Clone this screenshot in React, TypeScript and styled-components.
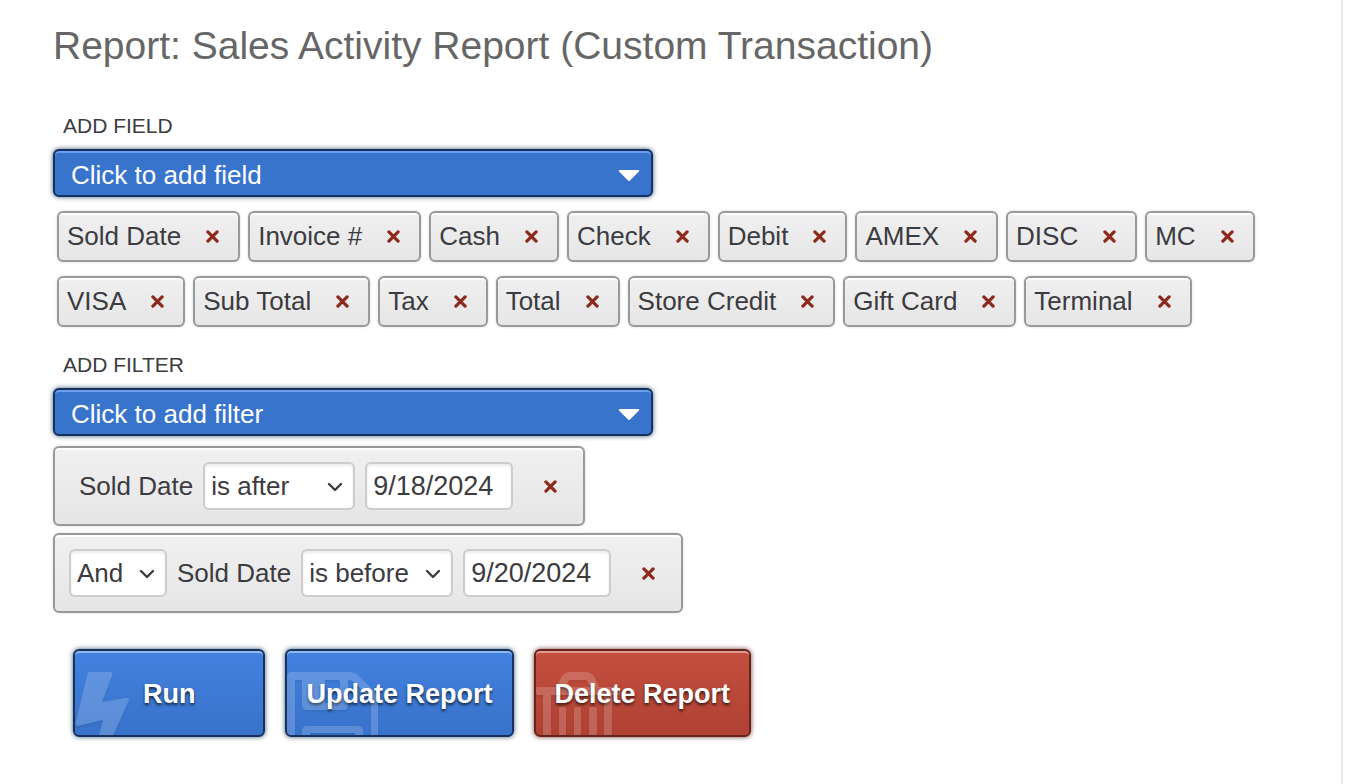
import React, { useState } from "react";
import styled, { createGlobalStyle, css } from "styled-components";

const GlobalStyle = createGlobalStyle`
  *, *::before, *::after { box-sizing: border-box; }
  body {
    margin: 0;
    background: #fff;
    color: #3b3b40;
    font-family: "Liberation Sans", Arial, sans-serif;
    font-size: 26px;
  }
  button, select, input { font: inherit; color: inherit; margin: 0; }
`;

const Page = styled.main`
  min-height: 100vh;
  margin-right: 3px;
  padding: 23px 53px 46px;
  border-right: 2px solid #e9e9e9;
`;

const Title = styled.h1`
  margin: 0 0 45px;
  font-size: 39px;
  line-height: 46px;
  font-weight: 400;
  color: #666;
`;

const Section = styled.section`
  margin-bottom: 26px;
`;

const SectionLabel = styled.label`
  display: block;
  margin: 0 0 11px 10px;
  font-size: 21px;
  line-height: 24px;
  text-transform: uppercase;
`;

const SelectWrap = styled.div<{ $width: string }>`
  position: relative;
  width: ${(p) => p.$width};
  max-width: 100%;
`;

const PickerSelect = styled.select`
  appearance: none;
  display: block;
  width: 100%;
  height: 48px;
  padding: 4px 48px 0 16px;
  border: 2px solid #16315d;
  border-radius: 6px;
  background: #3874cc;
  box-shadow: inset 0 2px 0 #6a9ff0, 0 0 5px rgba(10, 50, 80, 0.8);
  color: #fff;
`;

const CaretIcon = styled.svg`
  position: absolute;
  top: 20px;
  right: 13px;
  width: 22px;
  height: 13px;
  pointer-events: none;
`;

const panel = css`
  border: 2px solid #999;
  border-radius: 6px;
  background: linear-gradient(#f0f0f0, #e6e6e6);
  box-shadow: inset 0 3px 1px -1px #fff, 0 0 3px rgba(0, 0, 0, 0.15);
`;

const ChipList = styled.ul`
  display: flex;
  flex-wrap: wrap;
  gap: 14px 8px;
  margin: 14px 0 0 4px;
  padding: 0;
  list-style: none;
`;

const Chip = styled.li`
  ${panel}
  display: flex;
  align-items: center;
  gap: 25px;
  height: 51px;
  padding: 0 19px 0 8px;
  white-space: nowrap;
`;

const RemoveButton = styled.button`
  display: flex;
  padding: 0;
  border: 0;
  background: none;
  cursor: pointer;
`;

const FilterList = styled.div`
  display: flex;
  flex-direction: column;
  align-items: flex-start;
  gap: 7px;
  margin-top: 10px;
`;

const FilterRow = styled.div<{ $first?: boolean }>`
  ${panel}
  display: flex;
  align-items: center;
  gap: 10px;
  padding: 14px 26px 14px ${(p) => (p.$first ? 24 : 14)}px;
  white-space: nowrap;

  ${RemoveButton} {
    margin-left: 21px;
  }
`;

const field = css`
  display: block;
  height: 48px;
  border: 2px solid #ccc;
  border-radius: 6px;
  background: #fff;
  box-shadow: inset 0 2px 3px rgba(0, 0, 0, 0.08);
`;

const FilterSelect = styled.select`
  ${field}
  appearance: none;
  width: 100%;
  padding: 0 28px 0 6px;
`;

const DateInput = styled.input`
  ${field}
  width: 148px;
  padding: 0 6px;
  font-size: 27px;
`;

const ChevronIcon = styled.svg`
  position: absolute;
  top: 19px;
  right: 12px;
  width: 16px;
  height: 12px;
  pointer-events: none;
`;

const Actions = styled.div`
  display: flex;
  flex-wrap: wrap;
  gap: 20px;
  margin: 36px 0 0 20px;
`;

const tones = {
  blue: { edge: "#16315d", top: "#4282df", bottom: "#3872ca", shine: "#8fb8f0", glow: "rgba(10, 50, 80, 0.8)" },
  red: { edge: "#66221b", top: "#c44f3e", bottom: "#af4133", shine: "#e09c92", glow: "rgba(80, 20, 10, 0.8)" },
};

const ActionButton = styled.button<{ $tone: keyof typeof tones; $wide?: boolean }>`
  position: relative;
  overflow: hidden;
  height: 88px;
  padding: 2px ${(p) => (p.$wide ? 68 : 19)}px 0;
  border: 2px solid ${(p) => tones[p.$tone].edge};
  border-radius: 6px;
  background: linear-gradient(${(p) => tones[p.$tone].top}, ${(p) => tones[p.$tone].bottom});
  box-shadow: inset 0 2px 0 ${(p) => tones[p.$tone].shine}, 0 0 5px ${(p) => tones[p.$tone].glow};
  color: #fff;
  font-size: 27px;
  font-weight: 700;
  text-shadow: 0 2px 3px rgba(0, 0, 0, 0.7);
  white-space: nowrap;
  cursor: pointer;
`;

const Watermark = styled.svg`
  position: absolute;
  left: 0;
  top: 0;
  width: 92px;
  height: 84px;
  fill: #fff;
  opacity: 0.18;
  filter: drop-shadow(0 2px 1px rgba(0, 0, 0, 0.4));
  pointer-events: none;
`;

const Remove = ({ name, onClick }: { name: string; onClick: () => void }) => (
  <RemoveButton type="button" aria-label={`Remove ${name}`} onClick={onClick}>
    <svg width="13" height="13" viewBox="0 0 13 13" aria-hidden="true">
      <path d="M1.900 1.900L11.100 11.100M11.100 1.900L1.900 11.100" stroke="#8c2a1c" strokeWidth="3.2" strokeLinecap="round" />
    </svg>
  </RemoveButton>
);

const Picker = ({ id, prompt, options }: { id: string; prompt: string; options: string[] }) => (
  <SelectWrap $width="600px">
    <PickerSelect id={id} defaultValue="">
      <option value="">{prompt}</option>
      {options.map((o) => (
        <option key={o}>{o}</option>
      ))}
    </PickerSelect>
    <CaretIcon viewBox="0 0 22 13" aria-hidden="true">
      <path d="M1.6 1H20.4Q22 1.2 21 2.5L12 11.6Q11 12.6 10 11.6L1 2.5Q0 1.2 1.6 1Z" fill="#fff" />
    </CaretIcon>
  </SelectWrap>
);

const Choice = ({ label, width, value, options }: { label: string; width: string; value: string; options: string[] }) => (
  <SelectWrap $width={width}>
    <FilterSelect aria-label={label} defaultValue={value}>
      {options.map((o) => (
        <option key={o}>{o}</option>
      ))}
    </FilterSelect>
    <ChevronIcon viewBox="0 0 16 12" aria-hidden="true">
      <path d="M2 3L8 9L14 3" fill="none" stroke="#3b3b40" strokeWidth="2.4" strokeLinecap="round" strokeLinejoin="round" />
    </ChevronIcon>
  </SelectWrap>
);

const allFields = [
  "Sold Date", "Invoice #", "Cash", "Check", "Debit", "AMEX", "DISC", "MC",
  "VISA", "Sub Total", "Tax", "Total", "Store Credit", "Gift Card", "Terminal",
];
const operators = ["is after", "is before"];
const initialFilters = [
  { operator: "is after", date: "9/18/2024" },
  { operator: "is before", date: "9/20/2024" },
];

export default function App() {
  const [fields, setFields] = useState(allFields);
  const [filters, setFilters] = useState(initialFilters);

  return (
    <>
      <GlobalStyle />
      <Page>
        <Title>Report: Sales Activity Report (Custom Transaction)</Title>
        <Section>
          <SectionLabel htmlFor="add-field">Add Field</SectionLabel>
          <Picker id="add-field" prompt="Click to add field" options={allFields} />
          <ChipList>
            {fields.map((name) => (
              <Chip key={name}>
                <span>{name}</span>
                <Remove name={name} onClick={() => setFields(fields.filter((f) => f !== name))} />
              </Chip>
            ))}
          </ChipList>
        </Section>
        <Section>
          <SectionLabel htmlFor="add-filter">Add Filter</SectionLabel>
          <Picker id="add-filter" prompt="Click to add filter" options={allFields} />
          <FilterList>
            {filters.map((filter, i) => (
              <FilterRow key={filter.date} $first={i === 0}>
                {i > 0 && <Choice label="Combine with" width="98px" value="And" options={["And", "Or"]} />}
                <span>Sold Date</span>
                <Choice label="Condition" width="152px" value={filter.operator} options={operators} />
                <DateInput type="text" aria-label="Date" defaultValue={filter.date} />
                <Remove name="filter" onClick={() => setFilters(filters.filter((f) => f !== filter))} />
              </FilterRow>
            ))}
          </FilterList>
          <Actions>
            <ActionButton type="button" $tone="blue" $wide>
              Run
              <Watermark viewBox="0 0 92 84" aria-hidden="true">
                <path d="M15 21H35Q38 21 37.200 24L27 51L51 47Q55 46.500 53.500 50L35 92H22L28 69L3 75Q0 75 .6 72L12.500 23Q13 21 15 21Z" />
              </Watermark>
            </ActionButton>
            <ActionButton type="button" $tone="blue">
              Update Report
              <Watermark viewBox="0 0 92 84" aria-hidden="true">
                <path
                  fillRule="evenodd"
                  d="M5 21H61Q68 21 73 26L86 39Q91 44 91 51V95H0V26Q0 21 5 21ZM8 29V95H15V80Q15 75 20 75H71Q76 75 76 80V95H84V51Q84 48 81 45L67 31Q65 29 61 29V54Q61 59 56 59H20Q15 59 15 54V29ZM38 29V50Q38 52 40 52H51Q53 52 53 50V31Q53 29 51 29ZM23 82V95H68V82Z"
                />
              </Watermark>
            </ActionButton>
            <ActionButton type="button" $tone="red">
              Delete Report
              <Watermark viewBox="0 0 92 84" aria-hidden="true">
                <path
                  fillRule="evenodd"
                  d="M2 36H21L25 27Q28 21 34 21H50Q56 21 59 27L63 36H82Q84 36 84 38V42Q84 44 82 44H76V95H68V44H15V95H7V44H2Q0 44 0 42V38Q0 36 2 36ZM30 36H54L51.500 30Q51 29 49 29H35Q33 29 32.500 30Z"
                />
                <path d="M23 95V58Q23 56 25 56H28Q30 56 30 58V95ZM38 95V58Q38 56 40 56H43Q45 56 45 58V95ZM53 95V58Q53 56 55 56H59Q61 56 61 58V95Z" />
              </Watermark>
            </ActionButton>
          </Actions>
        </Section>
      </Page>
    </>
  );
}
